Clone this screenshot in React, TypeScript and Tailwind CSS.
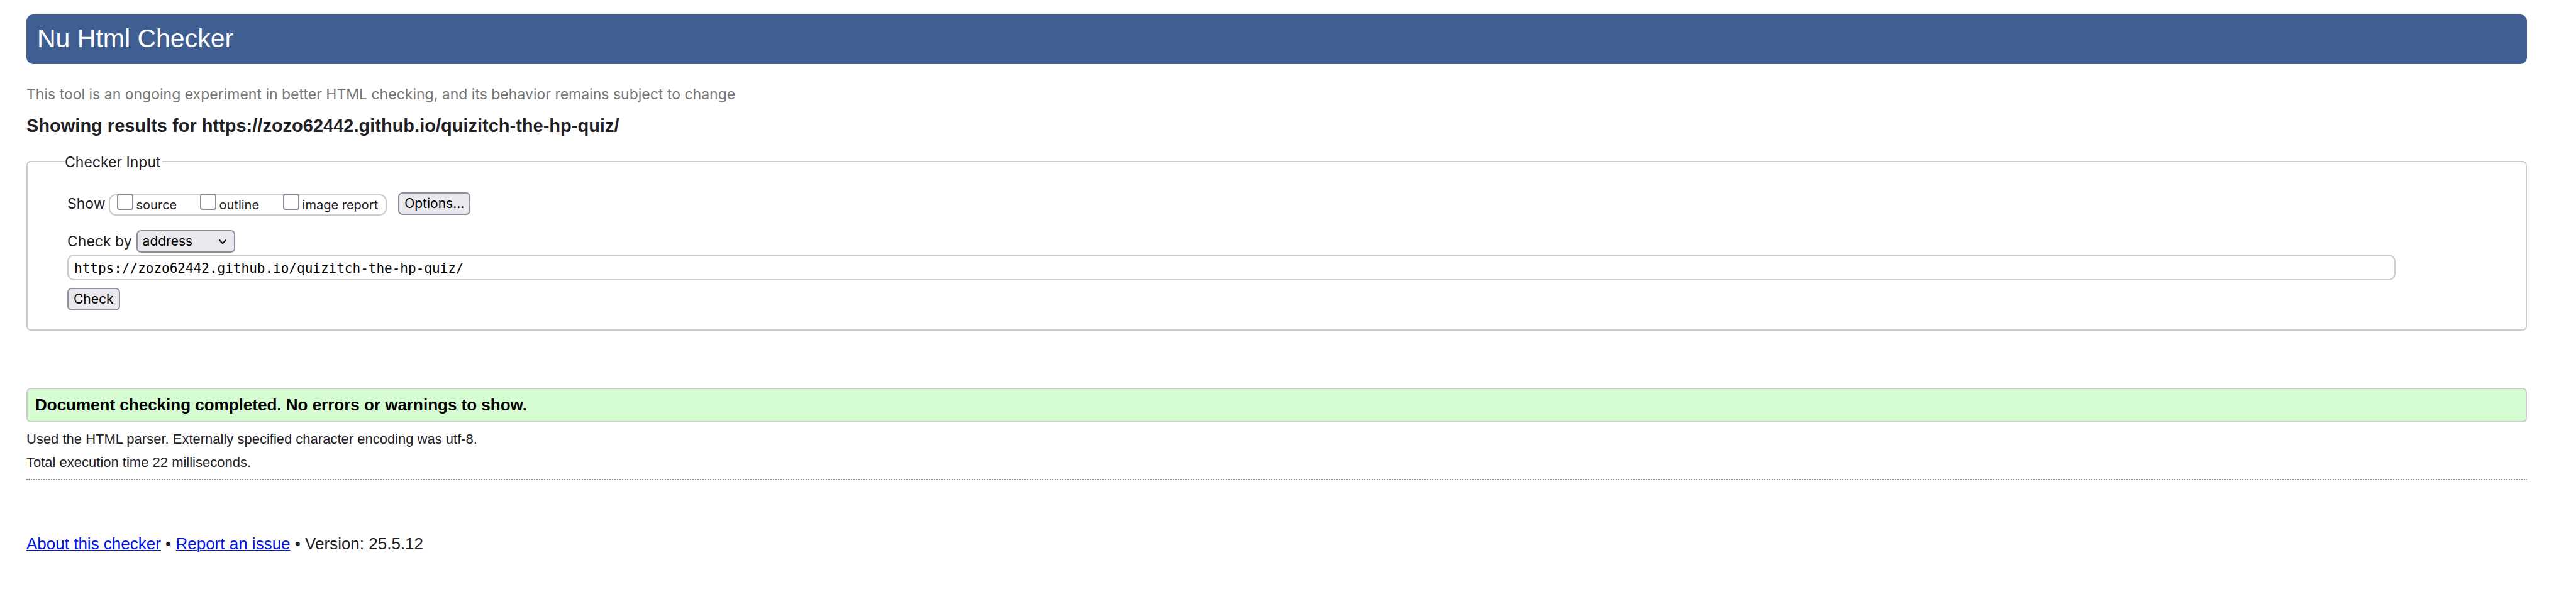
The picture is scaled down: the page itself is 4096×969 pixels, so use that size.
import { useState } from "react";
import type { ReactNode } from "react";

function ShowOption({ id, label, className = "" }: { id: string; label: string; className?: string }) {
  return (
    <div className={`flex items-start gap-[5px] ${className}`}>
      <input
        id={id}
        type="checkbox"
        className="-mt-[3px] size-[26px] shrink-0 appearance-none rounded-[4px] border-2 border-[#8f8e9d] bg-white checked:bg-[#0060df]"
      />
      <label htmlFor={id} className="text-[20px] leading-[30px] whitespace-nowrap">
        {label}
      </label>
    </div>
  );
}

function PushButton({ children }: { children: ReactNode }) {
  return (
    <button
      type="button"
      className="h-9 rounded-[7px] border-2 border-[#8f8e9d] bg-[#e9e8ec] px-2 text-[21px] leading-8 text-black"
    >
      {children}
    </button>
  );
}

export default function App() {
  const [address, setAddress] = useState("https://zozo62442.github.io/quizitch-the-hp-quiz/");

  return (
    <div className="min-h-screen bg-white pt-[23px] pr-[78px] pl-[42px] font-['Liberation_Sans',Arial,sans-serif] text-[#1f2126]">
      <header>
        <h1 className="rounded-[11px] bg-[#3f5e92] px-[17px] pb-[3px] text-[41px] leading-[76px] text-white">
          Nu Html Checker
        </h1>
        <p className="mt-[34px] font-['Inter','Liberation_Sans',sans-serif] text-[23px] leading-7 text-[#767676]">
          This tool is an ongoing experiment in better HTML checking, and its behavior remains subject to change
        </p>
      </header>

      <main>
        <h2 className="mt-[18px] text-[29px] leading-9 font-bold">
          Showing results for https://zozo62442.github.io/quizitch-the-hp-quiz/
        </h2>

        <form onSubmit={(e) => e.preventDefault()} className="font-['Inter','Liberation_Sans',sans-serif]">
          <fieldset className="mt-6 rounded-[7px] border-2 border-[#cbcbcb] pr-[207px] pb-[30px] pl-[59px]">
            <legend className="pt-0.5 pr-0.5 text-[23px] leading-7">Checker Input</legend>

            <div className="pl-1">
              <div className="mt-[34px] flex h-9 items-center">
                <span className="mr-[5px] text-[23px] leading-7">Show</span>
                <div className="mt-1 flex h-[34px] items-start rounded-[11px] border-2 border-[#cbcbcb] pr-3 pl-[11px]">
                  <ShowOption id="show-source" label="source" className="w-[132px]" />
                  <ShowOption id="show-outline" label="outline" className="w-[132px]" />
                  <ShowOption id="show-image-report" label="image report" />
                </div>
                <div className="ml-[18px]">
                  <PushButton>Options...</PushButton>
                </div>
              </div>

              <div className="mt-6 flex items-center gap-[7px]">
                <label htmlFor="check-by" className="text-[23px] leading-7">
                  Check by
                </label>
                <div className="relative">
                  <select
                    id="check-by"
                    className="block h-9 w-[157px] appearance-none rounded-[7px] border-2 border-[#8f8e9d] bg-[#e9e8ec] pl-2 text-[21px] leading-8 text-black"
                  >
                    <option>address</option>
                    <option>file upload</option>
                    <option>text input</option>
                  </select>
                  <svg
                    viewBox="0 0 12 8"
                    className="pointer-events-none absolute top-[15px] right-[14px] h-2 w-3 fill-none stroke-black stroke-2"
                    aria-hidden="true"
                  >
                    <path d="M1 1l5 5.4L11 1" strokeLinecap="round" strokeLinejoin="round" />
                  </svg>
                </div>
              </div>

              <input
                type="text"
                aria-label="Address"
                value={address}
                onChange={(e) => setAddress(e.target.value)}
                className="mt-[3px] block h-[41px] w-full rounded-[11px] border-2 border-[#cbcbcb] bg-white px-[9px] pt-0.5 font-['DejaVu_Sans_Mono',monospace] text-[21px] text-black"
              />

              <div className="mt-3 flex">
                <PushButton>Check</PushButton>
              </div>
            </div>
          </fieldset>
        </form>

        <p className="mt-[91px] rounded-[7px] border-2 border-[#cbcbcb] bg-[#d5fcd0] px-3 text-[26px] leading-[51px] font-bold text-black">
          Document checking completed. No errors or warnings to show.
        </p>
        <div className="mt-2 text-[22px] leading-[37px]">
          <p>Used the HTML parser. Externally specified character encoding was utf-8.</p>
          <p>Total execution time 22 milliseconds.</p>
        </div>
      </main>

      <hr className="mt-2 border-t-2 border-dotted border-[#888888]" />

      <footer className="mt-[83px] text-[26px] leading-9">
        <a href="#about" className="text-[#0014ee] underline decoration-1">
          About this checker
        </a>
        {" • "}
        <a href="#issues" className="text-[#0014ee] underline decoration-1">
          Report an issue
        </a>
        {" • Version: 25.5.12"}
      </footer>
    </div>
  );
}
